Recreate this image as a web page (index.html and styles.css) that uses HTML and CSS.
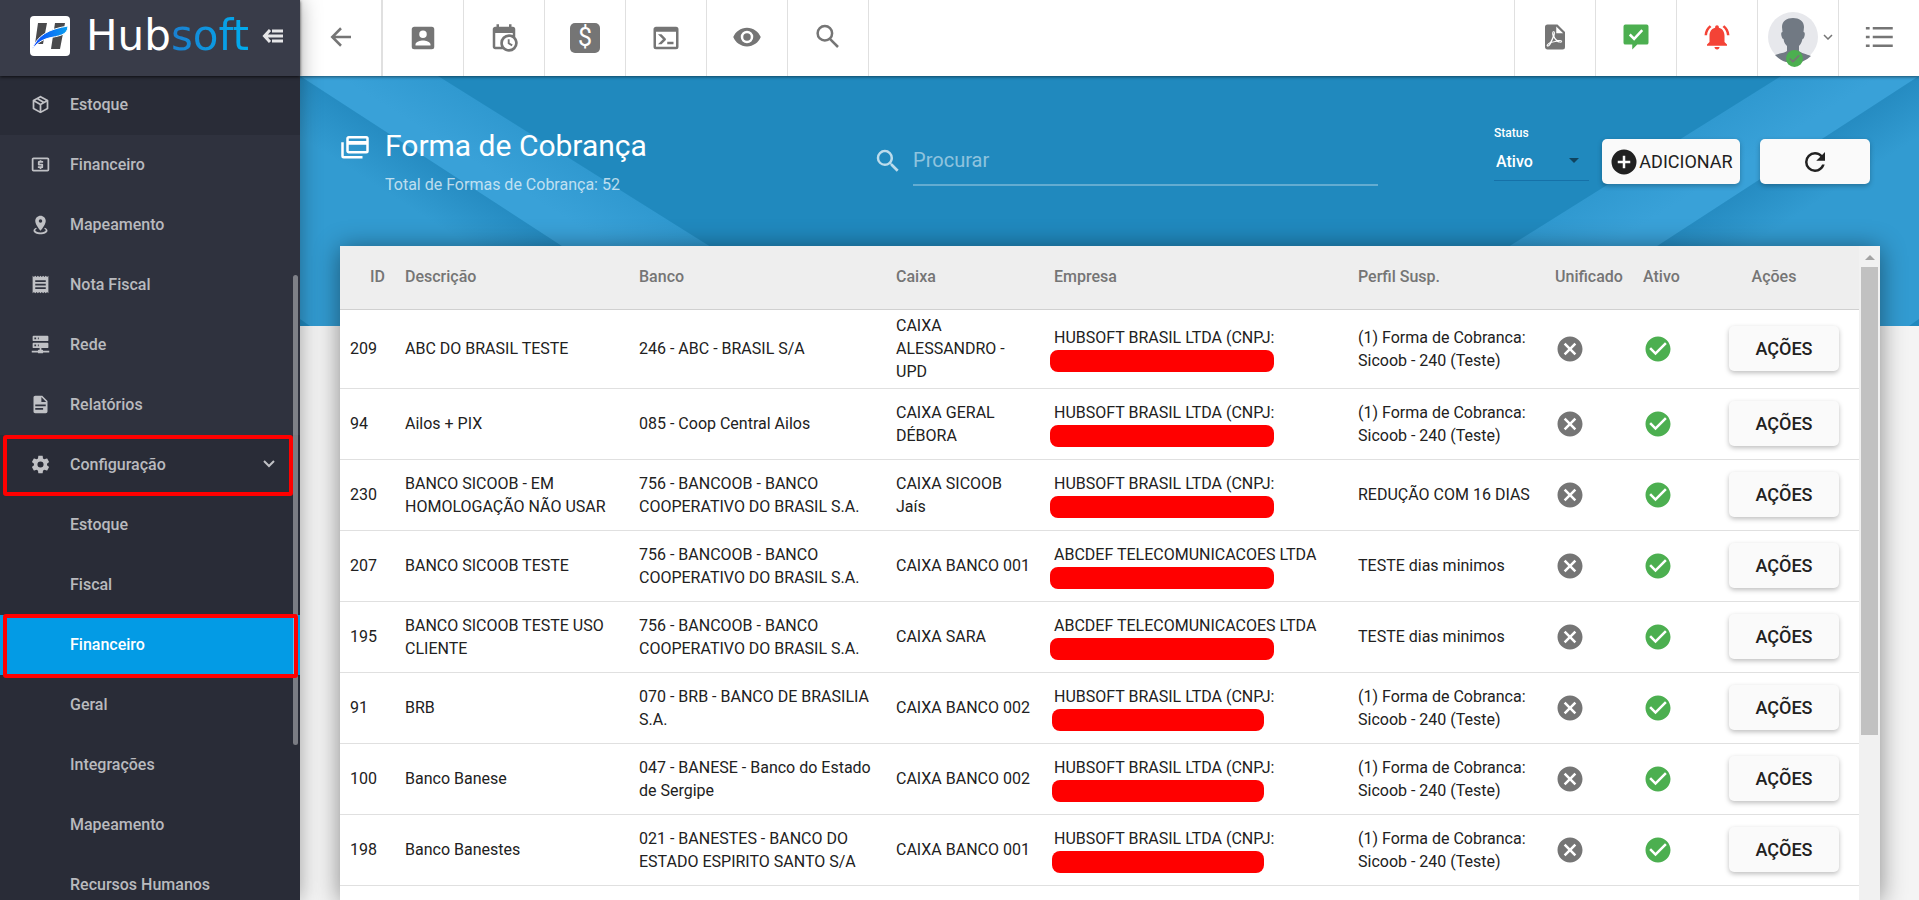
FILE: index.html
```html
<!DOCTYPE html>
<html lang="pt-BR">

<head>
    <meta charset="utf-8">
    <title>Hubsoft - Forma de Cobrança</title>
    <link rel="stylesheet" href="styles.css">
</head>

<body>
    <svg class="sprite" aria-hidden="true">
        <symbol id="i-close" viewBox="0 0 24 24">
            <path d="M12,2C17.53,2 22,6.47 22,12C22,17.53 17.53,22 12,22C6.47,22 2,17.53 2,12C2,6.47 6.47,2 12,2M15.59,7L12,10.59L8.41,7L7,8.41L10.59,12L7,15.59L8.41,17L12,13.41L15.59,17L17,15.59L13.41,12L17,8.41L15.59,7Z" />
        </symbol>
        <symbol id="i-check" viewBox="0 0 24 24">
            <path d="M12 2C6.48 2 2 6.48 2 12s4.48 10 10 10 10-4.48 10-10S17.52 2 12 2zm-2 15l-5-5 1.41-1.41L10 14.17l7.59-7.59L19 8l-9 9z" />
        </symbol>
    </svg>

    <aside class="sidebar">
        <div class="brand">
            <svg class="brand-mark" viewBox="0 0 40 40">
                <defs>
                    <linearGradient id="swoosh" x1="0" x2="1">
                        <stop offset="0" stop-color="#0d47ff" />
                        <stop offset="1" stop-color="#0aa0ee" />
                    </linearGradient>
                </defs>
                <rect width="40" height="40" rx="4" fill="#fff" />
                <path d="M8 7h9l-4 21H5zM25 7h10l-5 26h-9z" fill="#4a4a4c" />
                <path d="M2 34C7 19 19 13 38 10C38 20 27 20 19 22C11 24 6 28 2 34Z" fill="url(#swoosh)" stroke="#fff" />
            </svg>
            <span class="brand-name">Hub<span class="brand-soft">soft</span></span>
            <button class="collapse" aria-label="Recolher menu">
                <svg width="22" height="16" viewBox="0 0 22 16" fill="none" stroke="#e6e6e8" stroke-width="3">
                    <path d="M8 2L2.500 8l5.500 6M2 8h19M10 3h11M10 13h11" />
                </svg>
            </button>
        </div>

        <nav class="menu">
            <a href="#" class="hovered">
                <svg viewBox="0 0 24 24"><path d="M21,16.5C21,16.88 20.79,17.21 20.47,17.38L12.57,21.82C12.41,21.94 12.21,22 12,22C11.79,22 11.59,21.94 11.43,21.82L3.53,17.38C3.21,17.21 3,16.88 3,16.5V7.5C3,7.12 3.21,6.79 3.53,6.62L11.43,2.18C11.59,2.06 11.79,2 12,2C12.21,2 12.41,2.06 12.57,2.18L20.47,6.62C20.79,6.79 21,7.12 21,7.5V16.5M12,4.15L10.11,5.22L16,8.61L17.96,7.5L12,4.15M6.04,7.5L12,10.85L13.96,9.75L8.08,6.35L6.04,7.5M5,15.91L11,19.29V12.58L5,9.21V15.91M19,15.91V9.21L13,12.58V19.29L19,15.91Z" /></svg>
                <span>Estoque</span>
            </a>
            <a href="#">
                <svg viewBox="0 0 24 24"><path d="M11,17H13V16H14A1,1 0 0,0 15,15V12A1,1 0 0,0 14,11H11V10H15V8H13V7H11V8H10A1,1 0 0,0 9,9V12A1,1 0 0,0 10,13H13V14H9V16H11V17M20,4H4C2.89,4 2,4.89 2,6V18A2,2 0 0,0 4,20H20A2,2 0 0,0 22,18V6C22,4.89 21.1,4 20,4M20,18H4V6H20V18Z" /></svg>
                <span>Financeiro</span>
            </a>
            <a href="#">
                <svg viewBox="0 0 24 24"><path d="M12,2C15.31,2 18,4.66 18,7.95C18,12.41 12,19 12,19S6,12.41 6,7.95C6,4.66 8.69,2 12,2M12,6A2,2 0 0,0 10,8A2,2 0 0,0 12,10A2,2 0 0,0 14,8A2,2 0 0,0 12,6M20,19C20,21.21 16.42,23 12,23C7.58,23 4,21.21 4,19C4,17.71 5.22,16.56 7.11,15.83L7.75,16.74C6.67,17.19 6,17.81 6,18.5C6,19.88 8.69,21 12,21C15.31,21 18,19.88 18,18.5C18,17.81 17.33,17.19 16.25,16.74L16.89,15.83C18.78,16.56 20,17.71 20,19Z" /></svg>
                <span>Mapeamento</span>
            </a>
            <a href="#">
                <svg viewBox="0 0 24 24"><path d="M3,22L4.5,20.5L6,22L7.5,20.5L9,22L10.5,20.5L12,22L13.5,20.5L15,22L16.5,20.5L18,22L19.5,20.5L21,22V2L19.5,3.5L18,2L16.5,3.5L15,2L13.5,3.5L12,2L10.5,3.5L9,2L7.5,3.5L6,2L4.5,3.5L3,2M18,9H6V7H18M18,13H6V11H18M18,17H6V15H18V17Z" /></svg>
                <span>Nota Fiscal</span>
            </a>
            <a href="#">
                <svg viewBox="0 0 24 24"><path d="M13,18H14A1,1 0 0,1 15,19H22V21H15A1,1 0 0,1 14,22H10A1,1 0 0,1 9,21H2V19H9A1,1 0 0,1 10,18H11V16H4A1,1 0 0,1 3,15V11A1,1 0 0,1 4,10H20A1,1 0 0,1 21,11V15A1,1 0 0,1 20,16H13V18M4,2H20A1,1 0 0,1 21,3V7A1,1 0 0,1 20,8H4A1,1 0 0,1 3,7V3A1,1 0 0,1 4,2M9,6H10V4H9V6M9,14H10V12H9V14M5,4V6H7V4H5M5,12V14H7V12H5Z" /></svg>
                <span>Rede</span>
            </a>
            <a href="#">
                <svg viewBox="0 0 24 24"><path d="M13,9H18.5L13,3.5V9M6,2H14L20,8V20A2,2 0 0,1 18,22H6C4.89,22 4,21.1 4,20V4C4,2.89 4.89,2 6,2M15,18V16H6V18H15M18,14V12H6V14H18Z" /></svg>
                <span>Relatórios</span>
            </a>
            <a href="#" class="open marked">
                <svg viewBox="0 0 24 24"><path d="M12,15.5A3.5,3.5 0 0,1 8.5,12A3.5,3.5 0 0,1 12,8.5A3.5,3.5 0 0,1 15.5,12A3.5,3.5 0 0,1 12,15.5M19.43,12.97C19.47,12.65 19.5,12.33 19.5,12C19.5,11.67 19.47,11.34 19.43,11L21.54,9.37C21.73,9.22 21.78,8.95 21.66,8.73L19.66,5.27C19.54,5.05 19.27,4.96 19.05,5.05L16.56,6.05C16.04,5.66 15.5,5.32 14.87,5.07L14.5,2.42C14.46,2.18 14.25,2 14,2H10C9.75,2 9.54,2.18 9.5,2.42L9.13,5.07C8.5,5.32 7.96,5.66 7.44,6.05L4.95,5.05C4.73,4.96 4.46,5.05 4.34,5.27L2.34,8.73C2.21,8.95 2.27,9.22 2.46,9.37L4.57,11C4.53,11.34 4.5,11.67 4.5,12C4.5,12.33 4.53,12.65 4.57,12.97L2.46,14.63C2.27,14.78 2.21,15.05 2.34,15.27L4.34,18.73C4.46,18.95 4.73,19.03 4.95,18.95L7.44,17.94C7.96,18.34 8.5,18.68 9.13,18.93L9.5,21.58C9.54,21.82 9.75,22 10,22H14C14.25,22 14.46,21.82 14.5,21.58L14.87,18.93C15.5,18.67 16.04,18.34 16.56,17.94L19.05,18.95C19.27,19.03 19.54,18.95 19.66,18.73L21.66,15.27C21.78,15.05 21.73,14.78 21.54,14.63L19.43,12.97Z" /></svg>
                <span>Configuração</span>
                <svg class="chevron" viewBox="0 0 12 12" fill="none"><path d="M1 3l5 5 5-5" stroke="#c0c1c5" stroke-width="2" /></svg>
            </a>
            <div class="submenu">
                <a href="#">Estoque</a>
                <a href="#">Fiscal</a>
                <a href="#" class="active marked">Financeiro</a>
                <a href="#">Geral</a>
                <a href="#">Integrações</a>
                <a href="#">Mapeamento</a>
                <a href="#">Recursos Humanos</a>
            </div>
        </nav>
        <div class="menu-scroll"></div>
    </aside>

    <main>
        <header class="toolbar">
            <button class="tool last" aria-label="Voltar">
                <svg viewBox="0 0 24 24" fill="none" stroke="#757575" stroke-width="2"><path d="M20 12H5M12 5L5 12l7 7" /></svg>
            </button>
            <button class="tool quick" aria-label="Clientes">
                <svg viewBox="0 0 24 24"><path d="M6,17C6,15 10,13.9 12,13.9C14,13.9 18,15 18,17V18H6M15,9A3,3 0 0,1 12,12A3,3 0 0,1 9,9A3,3 0 0,1 12,6A3,3 0 0,1 15,9M3,5V19A2,2 0 0,0 5,21H19A2,2 0 0,0 21,19V5A2,2 0 0,0 19,3H5C3.89,3 3,3.9 3,5Z" /></svg>
            </button>
            <button class="tool quick" aria-label="Agenda">
                <svg viewBox="0 0 24 24"><path d="M15,13H16.5V15.82L18.94,17.23L18.19,18.53L15,16.69V13M19,8H5V19H9.67C9.24,18.09 9,17.07 9,16A7,7 0 0,1 16,9C17.07,9 18.09,9.24 19,9.67V8M5,21C3.89,21 3,20.1 3,19V5C3,3.89 3.89,3 5,3H6V1H8V3H16V1H18V3H19A2,2 0 0,1 21,5V11.1C22.24,12.36 23,14.09 23,16A7,7 0 0,1 16,23C14.09,23 12.36,22.24 11.1,21H5M16,11.15A4.85,4.85 0 0,0 11.15,16C11.15,18.68 13.32,20.85 16,20.85A4.85,4.85 0 0,0 20.85,16C20.85,13.32 18.68,11.15 16,11.15Z" /></svg>
            </button>
            <button class="tool quick" aria-label="Financeiro">
                <span class="dollar">$</span>
            </button>
            <button class="tool quick" aria-label="Terminal">
                <svg viewBox="0 0 24 24"><path d="M20,19V7H4V19H20M20,3A2,2 0 0,1 22,5V19A2,2 0 0,1 20,21H4A2,2 0 0,1 2,19V5C2,3.89 2.9,3 4,3H20M13,17V15H18V17H13M9.58,13L5.57,9H8.4L11.7,12.3C12.09,12.69 12.09,13.33 11.7,13.72L8.42,17H5.59L9.58,13Z" /></svg>
            </button>
            <button class="tool" aria-label="Visualizar">
                <svg viewBox="0 0 24 24"><path d="M12,9A3,3 0 0,0 9,12A3,3 0 0,0 12,15A3,3 0 0,0 15,12A3,3 0 0,0 12,9M12,17A5,5 0 0,1 7,12A5,5 0 0,1 12,7A5,5 0 0,1 17,12A5,5 0 0,1 12,17M12,4.5C7,4.5 2.73,7.61 1,12C2.73,16.39 7,19.5 12,19.5C17,19.5 21.27,16.39 23,12C21.27,7.61 17,4.5 12,4.5Z" /></svg>
            </button>
            <button class="tool" aria-label="Pesquisar">
                <svg viewBox="0 0 24 24" fill="none" stroke="#757575" stroke-width="2"><circle cx="9.500" cy="9" r="5.800" /><path d="M13.500 13.500L20 20" /></svg>
            </button>

            <div class="toolbar-right">
                <button class="tool" aria-label="PDF">
                    <svg viewBox="1 0 24 24"><path d="M14,9H19.5L14,3.5V9M7,2H15L21,8V20A2,2 0 0,1 19,22H7C5.89,22 5,21.1 5,20V4A2,2 0 0,1 7,2M11.93,12.44C12.34,13.34 12.86,14.08 13.46,14.59L13.87,14.91C13,15.07 11.8,15.35 10.53,15.84V15.84L10.42,15.88L10.92,14.84C11.37,13.97 11.7,13.18 11.93,12.44M18.41,16.25C18.59,16.07 18.68,15.84 18.69,15.59C18.72,15.39 18.67,15.2 18.57,15.04C18.28,14.57 17.53,14.35 16.29,14.35L15,14.42L14.13,13.84C13.5,13.32 12.93,12.41 12.53,11.28L12.57,11.14C12.9,9.81 13.21,8.2 12.55,7.54C12.39,7.38 12.17,7.3 11.94,7.3H11.7C11.33,7.3 11,7.69 10.91,8.07C10.54,9.4 10.76,10.13 11.13,11.34V11.35C10.88,12.23 10.56,13.25 10.05,14.28L9.09,16.08L8.2,16.57C7,17.32 6.43,18.16 6.32,18.69C6.28,18.88 6.3,19.05 6.37,19.23L6.4,19.28L6.88,19.59L7.32,19.7C8.13,19.7 9.05,18.75 10.29,16.63L10.47,16.56C11.5,16.23 12.78,16 14.5,15.81C15.53,16.32 16.74,16.55 17.5,16.55C17.94,16.55 18.24,16.44 18.41,16.25M18,15.54L18.09,15.65C18.08,15.75 18.05,15.76 18,15.78H17.96L17.77,15.8C17.31,15.8 16.6,15.61 15.87,15.29C15.96,15.19 16,15.19 16.1,15.19C17.5,15.19 17.9,15.44 18,15.54M8.83,17C8.18,18.19 7.59,18.85 7.14,19C7.19,18.62 7.64,17.96 8.35,17.31L8.83,17M11.85,10.09C11.62,9.19 11.61,8.46 11.78,8.04L11.85,7.92L12,7.97C12.17,8.21 12.19,8.53 12.09,9.07L12.06,9.23L11.9,10.05L11.85,10.09Z" /></svg>
                </button>
                <button class="tool" aria-label="Mensagens">
                    <svg viewBox="0 0 24 24"><path d="M3.500 2h17A1.500 1.500 0 0 1 22 3.500v13A1.500 1.500 0 0 1 20.500 18H13l-4 4v-4H3.500A1.500 1.500 0 0 1 2 16.500v-13A1.500 1.500 0 0 1 3.500 2z" fill="#4caf50" /><path d="M7 10l3.500 3.500L17 6.500" fill="none" stroke="#fff" stroke-width="2" /></svg>
                </button>
                <button class="tool" aria-label="Notificações">
                    <svg viewBox="0 0 24 24"><path fill="#f44336" d="M7.58 4.08L6.15 2.65C3.75 4.48 2.17 7.3 2.03 10.5h2c.15-2.65 1.51-4.97 3.55-6.42zm12.39 6.42h2c-.15-3.2-1.73-6.02-4.12-7.85l-1.42 1.43c2.02 1.45 3.39 3.77 3.54 6.42zM18 11c0-3.07-1.64-5.64-4.5-6.32V4c0-.83-.67-1.5-1.5-1.5s-1.5.67-1.5 1.5v.68C7.63 5.36 6 7.92 6 11v5l-2 2v1h16v-1l-2-2v-5zm-6 11c.14 0 .27-.01.4-.04.65-.14 1.18-.58 1.44-1.18.1-.24.15-.5.15-.78h-4c.01 1.1.9 2 2.01 2z" /></svg>
                </button>
                <button class="tool user" aria-label="Usuário">
                    <span class="avatar">
                        <svg viewBox="0 0 50 50">
                            <circle cx="25" cy="25" r="25" fill="#e7e8ec" />
                            <path d="M25 6C31 6 36 9 36 15L35.500 20C37 20 37 22 36.500 24C36 26 35.500 27 34.500 27C33.500 31 32 33 31 34V39C33 41 38 42 43 44A25 25 0 0 1 7 43C12 41 17 41 19 39V34C18 33 16 31 15.500 27C14.500 27 14 26 13.500 24C13 22 13 20 14.500 20L14 15C14 9 19 6 25 6Z" fill="#717983" />
                        </svg>
                        <svg class="badge" viewBox="0 0 16 16"><circle cx="8" cy="8" r="8" fill="#4caf50" /><path d="M3.500 8l3 3 6-6" fill="none" stroke="#757575" stroke-width="1.500" /></svg>
                    </span>
                    <svg class="caret" viewBox="0 0 10 6" fill="none" stroke="#757575" stroke-width="1.500"><path d="M1 1l4 4 4-4" /></svg>
                </button>
                <button class="tool last" aria-label="Lista">
                    <svg viewBox="0 0 24 24" fill="none" stroke="#757575" stroke-width="2"><path d="M7 5h16M7 12h16M7 19h16M1.500 5h3M1.500 12h3M1.500 19h3" /></svg>
                </button>
            </div>
        </header>

        <section class="hero">
            <svg class="hero-bg" viewBox="0 0 1619 250" preserveAspectRatio="none" aria-hidden="true">
                <defs>
                    <linearGradient id="sideL" gradientUnits="userSpaceOnUse" x1="192" y1="125" x2="165" y2="167">
                        <stop offset="0" stop-color="#268cc2" />
                        <stop offset="1" stop-color="#329bd1" />
                    </linearGradient>
                    <linearGradient id="bandL" gradientUnits="userSpaceOnUse" x1="338" y1="125" x2="310" y2="170">
                        <stop offset="0" stop-color="#3099d0" />
                        <stop offset="1" stop-color="#39a1d8" />
                    </linearGradient>
                </defs>
                <rect width="1619" height="250" fill="#2089be" />
                <g id="fold">
                    <path d="M0 0L385 250H0Z" fill="url(#sideL)" />
                    <path d="M0 0H138L537 250H385Z" fill="url(#bandL)" />
                    <path d="M0 243L10 250H0Z" fill="#2089be" />
                </g>
                <use href="#fold" transform="matrix(-1 0 0 1 1619 0)" />
            </svg>

            <div class="title">
                <svg viewBox="0 0 24 24" fill="#fff"><path d="M21,8V6H7V8H21M21,16V11H7V16H21M21,4A2,2 0 0,1 23,6V16A2,2 0 0,1 21,18H7C5.89,18 5,17.1 5,16V6C5,4.89 5.89,4 7,4H21M3,20H18V22H3A2,2 0 0,1 1,20V9H3V20Z" /></svg>
                <div>
                    <h1>Forma de Cobrança</h1>
                    <p>Total de Formas de Cobrança: 52</p>
                </div>
            </div>

            <div class="search">
                <label for="procurar" aria-label="Procurar">
                    <svg viewBox="0 0 24 24"><path d="M9.5,3A6.5,6.5 0 0,1 16,9.5C16,11.11 15.41,12.59 14.44,13.73L14.71,14H15.5L20.5,19L19,20.5L14,15.5V14.71L13.73,14.44C12.59,15.41 11.11,16 9.5,16A6.5,6.5 0 0,1 3,9.5A6.5,6.5 0 0,1 9.5,3M9.5,5C7,5 5,7 5,9.5C5,12 7,14 9.5,14C12,14 14,12 14,9.5C14,7 12,5 9.5,5Z" /></svg>
                </label>
                <input type="text" id="procurar" placeholder="Procurar">
            </div>

            <div class="status">
                <label for="status">Status</label>
                <select id="status">
                    <option>Ativo</option>
                </select>
            </div>

            <div class="hero-actions">
                <button class="raised add">
                    <svg viewBox="0 0 24 24"><path d="M17,13H13V17H11V13H7V11H11V7H13V11H17M12,2A10,10 0 0,0 2,12A10,10 0 0,0 12,22A10,10 0 0,0 22,12A10,10 0 0,0 12,2Z" /></svg>
                    <span>ADICIONAR</span>
                </button>
                <button class="raised" aria-label="Atualizar">
                    <svg viewBox="0 0 24 24"><path d="M17.65,6.35C16.2,4.9 14.21,4 12,4A8,8 0 0,0 4,12A8,8 0 0,0 12,20C15.73,20 18.84,17.45 19.73,14H17.65C16.83,16.33 14.61,18 12,18A6,6 0 0,1 6,12A6,6 0 0,1 12,6C13.66,6 15.14,6.69 16.22,7.78L13,11H20V4L17.65,6.35Z" /></svg>
                </button>
            </div>
        </section>

        <section class="card">
            <div class="table-wrap">
                <table>
                    <thead>
                        <tr>
                            <th class="c-id">ID</th>
                            <th class="c-desc">Descrição</th>
                            <th class="c-banco">Banco</th>
                            <th class="c-caixa">Caixa</th>
                            <th class="c-empresa">Empresa</th>
                            <th class="c-perfil">Perfil Susp.</th>
                            <th class="c-unif">Unificado</th>
                            <th class="c-ativo">Ativo</th>
                            <th class="c-acoes">Ações</th>
                        </tr>
                    </thead>
                    <tbody>
                        <tr>
                            <td>209</td>
                            <td>ABC DO BRASIL TESTE</td>
                            <td>246 - ABC - BRASIL S/A</td>
                            <td>CAIXA ALESSANDRO - UPD</td>
                            <td>HUBSOFT BRASIL LTDA (CNPJ:<span class="redact"></span></td>
                            <td>(1) Forma de Cobranca: Sicoob - 240 (Teste)</td>
                            <td><svg class="no"><use href="#i-close" /></svg></td>
                            <td><svg class="yes"><use href="#i-check" /></svg></td>
                            <td class="acoes"><button class="raised">AÇÕES</button></td>
                        </tr>
                        <tr>
                            <td>94</td>
                            <td>Ailos + PIX</td>
                            <td>085 - Coop Central Ailos</td>
                            <td>CAIXA GERAL DÉBORA</td>
                            <td>HUBSOFT BRASIL LTDA (CNPJ:<span class="redact"></span></td>
                            <td>(1) Forma de Cobranca: Sicoob - 240 (Teste)</td>
                            <td><svg class="no"><use href="#i-close" /></svg></td>
                            <td><svg class="yes"><use href="#i-check" /></svg></td>
                            <td class="acoes"><button class="raised">AÇÕES</button></td>
                        </tr>
                        <tr>
                            <td>230</td>
                            <td>BANCO SICOOB - EM HOMOLOGAÇÃO NÃO USAR</td>
                            <td>756 - BANCOOB - BANCO COOPERATIVO DO BRASIL S.A.</td>
                            <td>CAIXA SICOOB Jaís</td>
                            <td>HUBSOFT BRASIL LTDA (CNPJ:<span class="redact"></span></td>
                            <td>REDUÇÃO COM 16 DIAS</td>
                            <td><svg class="no"><use href="#i-close" /></svg></td>
                            <td><svg class="yes"><use href="#i-check" /></svg></td>
                            <td class="acoes"><button class="raised">AÇÕES</button></td>
                        </tr>
                        <tr>
                            <td>207</td>
                            <td>BANCO SICOOB TESTE</td>
                            <td>756 - BANCOOB - BANCO COOPERATIVO DO BRASIL S.A.</td>
                            <td>CAIXA BANCO 001</td>
                            <td>ABCDEF TELECOMUNICACOES LTDA<span class="redact"></span></td>
                            <td>TESTE dias minimos</td>
                            <td><svg class="no"><use href="#i-close" /></svg></td>
                            <td><svg class="yes"><use href="#i-check" /></svg></td>
                            <td class="acoes"><button class="raised">AÇÕES</button></td>
                        </tr>
                        <tr>
                            <td>195</td>
                            <td>BANCO SICOOB TESTE USO CLIENTE</td>
                            <td>756 - BANCOOB - BANCO COOPERATIVO DO BRASIL S.A.</td>
                            <td>CAIXA SARA</td>
                            <td>ABCDEF TELECOMUNICACOES LTDA<span class="redact"></span></td>
                            <td>TESTE dias minimos</td>
                            <td><svg class="no"><use href="#i-close" /></svg></td>
                            <td><svg class="yes"><use href="#i-check" /></svg></td>
                            <td class="acoes"><button class="raised">AÇÕES</button></td>
                        </tr>
                        <tr>
                            <td>91</td>
                            <td>BRB</td>
                            <td>070 - BRB - BANCO DE BRASILIA S.A.</td>
                            <td>CAIXA BANCO 002</td>
                            <td>HUBSOFT BRASIL LTDA (CNPJ:<span class="redact short"></span></td>
                            <td>(1) Forma de Cobranca: Sicoob - 240 (Teste)</td>
                            <td><svg class="no"><use href="#i-close" /></svg></td>
                            <td><svg class="yes"><use href="#i-check" /></svg></td>
                            <td class="acoes"><button class="raised">AÇÕES</button></td>
                        </tr>
                        <tr>
                            <td>100</td>
                            <td>Banco Banese</td>
                            <td>047 - BANESE - Banco do Estado de Sergipe</td>
                            <td>CAIXA BANCO 002</td>
                            <td>HUBSOFT BRASIL LTDA (CNPJ:<span class="redact short"></span></td>
                            <td>(1) Forma de Cobranca: Sicoob - 240 (Teste)</td>
                            <td><svg class="no"><use href="#i-close" /></svg></td>
                            <td><svg class="yes"><use href="#i-check" /></svg></td>
                            <td class="acoes"><button class="raised">AÇÕES</button></td>
                        </tr>
                        <tr>
                            <td>198</td>
                            <td>Banco Banestes</td>
                            <td>021 - BANESTES - BANCO DO ESTADO ESPIRITO SANTO S/A</td>
                            <td>CAIXA BANCO 001</td>
                            <td>HUBSOFT BRASIL LTDA (CNPJ:<span class="redact short"></span></td>
                            <td>(1) Forma de Cobranca: Sicoob - 240 (Teste)</td>
                            <td><svg class="no"><use href="#i-close" /></svg></td>
                            <td><svg class="yes"><use href="#i-check" /></svg></td>
                            <td class="acoes"><button class="raised">AÇÕES</button></td>
                        </tr>
                    </tbody>
                </table>
            </div>
            <div class="scrollbar">
                <span class="scroll-up"></span>
                <div class="scroll-thumb"></div>
            </div>
        </section>
    </main>
</body>

</html>
```
FILE: styles.css
```css
* {
    box-sizing: border-box;
}

body {
    margin: 0;
    display: flex;
    height: 100vh;
    overflow: hidden;
    background-color: #f4f4f4;
    color: #212121;
    font-family: Roboto, "Liberation Sans", sans-serif;
    font-size: 16px;
}

button,
input,
select {
    font-family: inherit;
}

button {
    cursor: pointer;
}

.sprite {
    display: none;
}

/* Sidebar */

.sidebar {
    position: relative;
    z-index: 2;
    display: flex;
    flex-direction: column;
    flex: none;
    width: 300px;
    background-color: #2f323e;
    box-shadow: 0 0 20px rgba(0, 0, 0, 0.35);
}

.brand {
    position: relative;
    z-index: 1;
    display: flex;
    flex: none;
    align-items: center;
    height: 76px;
    padding: 0 16px 4px 30px;
    background-color: #393c49;
    box-shadow: 0 1px 3px rgba(0, 0, 0, 0.7);
}

.brand-mark {
    width: 40px;
    height: 40px;
    margin-right: 16px;
}

.brand-name {
    color: #fff;
    font-family: "DejaVu Sans", sans-serif;
    font-size: 42px;
    line-height: 40px;
}

.brand-soft {
    background: linear-gradient(90deg, #1b7fd0, #00aeef);
    -webkit-background-clip: text;
    background-clip: text;
    color: transparent;
}

.collapse {
    display: flex;
    margin-left: auto;
    padding: 0;
    border: none;
    background: none;
}

.menu {
    flex: 1;
    min-height: 0;
    margin-top: -1px;
    overflow: hidden;
}

.menu a {
    position: relative;
    display: flex;
    align-items: center;
    height: 60px;
    padding: 0 20px 2px 30px;
    color: #b9babe;
    font-weight: 500;
    text-decoration: none;
}

.menu svg {
    width: 21px;
    height: 21px;
    margin-right: 19px;
    fill: #c0c1c5;
}

.menu .chevron {
    width: 12px;
    height: 12px;
    margin: 0 5px 0 auto;
    fill: none;
}

.menu .hovered,
.menu .open,
.submenu {
    background-color: #292c37;
}

.menu .submenu a {
    padding-left: 70px;
}

.menu .active {
    background-color: #039be5;
    color: #fff;
}

/* Red frames over the path to follow in the menu */
.marked::after {
    content: "";
    position: absolute;
    z-index: 2;
    inset: 0 7px -1px 3px;
    border: 4px solid #f00;
    border-radius: 3px;
}

.active.marked::after {
    inset: -1px 2px -3px 3px;
}

.menu-scroll {
    position: absolute;
    top: 275px;
    right: 2px;
    width: 5px;
    height: 470px;
    border-radius: 3px;
    background-color: rgba(255, 255, 255, 0.38);
}

/* Toolbar */

main {
    display: flex;
    flex: 1;
    flex-direction: column;
    min-width: 0;
}

.toolbar {
    position: relative;
    z-index: 1;
    display: flex;
    flex: none;
    height: 76px;
    background-color: #fff;
    box-shadow: 0 1px 3px rgba(0, 0, 0, 0.5);
}

.toolbar-right {
    display: flex;
    margin-left: auto;
}

.tool {
    display: flex;
    align-items: center;
    justify-content: center;
    width: 81px;
    padding: 0 0 3px;
    border: none;
    border-right: 1px solid #e0e0e0;
    background: none;
}

.toolbar > .last {
    width: 83px;
    border-right-width: 2px;
}

.toolbar-right .tool {
    border-right: none;
    border-left: 1px solid #e0e0e0;
}

.quick {
    padding: 0;
}

.tool svg {
    width: 30px;
    height: 30px;
    fill: #757575;
}

.tool svg[fill="none"] {
    fill: none;
}

.dollar {
    width: 30px;
    height: 30px;
    border-radius: 5px;
    background-color: #757575;
    color: #fff;
    font-size: 25px;
    line-height: 30px;
}

.toolbar-right .user {
    justify-content: flex-end;
    gap: 5px;
    padding-right: 5px;
}

.avatar {
    position: relative;
    display: flex;
}

.avatar svg {
    width: 50px;
    height: 50px;
}

.avatar .badge {
    position: absolute;
    left: 18px;
    bottom: -5px;
    width: 17px;
    height: 17px;
}

.tool .caret {
    width: 10px;
    height: 6px;
}

/* Page header */

.hero {
    position: relative;
    display: flex;
    flex: none;
    align-items: flex-start;
    height: 250px;
    padding: 49px 49px 0 40px;
    color: #fff;
}

.hero-bg {
    position: absolute;
    inset: 0;
    z-index: -1;
    width: 100%;
    height: 100%;
}

.title {
    display: flex;
    flex: 1;
    gap: 15px;
}

.title svg {
    width: 30px;
    height: 30px;
    margin-top: 6px;
}

.title h1 {
    margin: 0;
    font-size: 30px;
    font-weight: 400;
    line-height: 42px;
}

.title p {
    margin: 6px 0 0;
    color: rgba(255, 255, 255, 0.7);
    line-height: 24px;
}

.search {
    display: flex;
    align-items: center;
    gap: 10px;
    width: 33%;
    margin: 11px 116px 0 0;
}

.search svg {
    display: block;
    width: 30px;
    height: 30px;
    fill: rgba(255, 255, 255, 0.7);
}

.search input {
    flex: 1;
    min-width: 0;
    height: 50px;
    padding: 0;
    border: none;
    border-bottom: 2px solid rgba(255, 255, 255, 0.3);
    outline: none;
    background: none;
    color: #fff;
    font-size: 20px;
}

.search input::placeholder {
    color: rgba(255, 255, 255, 0.5);
}

.status {
    position: relative;
    display: flex;
    flex-direction: column;
    width: 95px;
    margin-right: 13px;
}

.status label {
    font-size: 12px;
    font-weight: 500;
    line-height: 16px;
}

.status select {
    height: 40px;
    padding: 1px 2px 0;
    border: none;
    border-bottom: 1px solid rgba(0, 60, 120, 0.3);
    appearance: none;
    background: none;
    color: #fff;
    font-size: 16px;
    font-weight: 500;
}

.status::after {
    content: "";
    position: absolute;
    top: 33px;
    right: 10px;
    border: 5px solid transparent;
    border-top-color: rgba(0, 0, 0, 0.5);
    border-bottom: none;
}

.hero-actions {
    display: flex;
    gap: 20px;
    padding-top: 14px;
}

.raised {
    display: inline-flex;
    align-items: center;
    justify-content: center;
    width: 110px;
    height: 45px;
    padding: 0;
    border: none;
    border-radius: 5px;
    background-color: #fafafa;
    box-shadow: 0 2px 5px rgba(0, 0, 0, 0.26);
    color: #212121;
    font-size: 18px;
    font-weight: 500;
}

.raised svg {
    width: 30px;
    height: 30px;
    fill: #212121;
}

.add {
    width: 138px;
    font-weight: 400;
}

/* Table */

.card {
    position: relative;
    display: flex;
    flex: 1;
    min-height: 0;
    margin: -80px 39px 0 40px;
    background-color: #fff;
    box-shadow: 0 2px 24px rgba(0, 0, 0, 0.45);
}

.table-wrap {
    flex: 1;
    overflow: hidden;
}

table {
    width: 100%;
    border-spacing: 0;
    table-layout: fixed;
}

th {
    height: 64px;
    padding: 0 10px 2px;
    border-bottom: 1px solid #d0d0d0;
    background-color: #eee;
    color: #757575;
    font-weight: 500;
    text-align: left;
}

td {
    height: 71px;
    padding: 4px 10px 5px;
    border-bottom: 1px solid #e0e0e0;
    line-height: 23px;
}

td svg {
    display: block;
    width: 30px;
    height: 30px;
}

.no {
    fill: #757575;
}

.yes {
    fill: #4caf50;
}

.c-id {
    width: 55px;
    text-align: right;
}

.c-desc {
    width: 234px;
}

.c-banco {
    width: 257px;
}

.c-caixa {
    width: 158px;
}

.c-perfil {
    width: 197px;
}

.c-unif {
    width: 88px;
}

.c-ativo {
    width: 76px;
}

.c-acoes {
    width: 150px;
    padding: 0 20px 2px 0;
    text-align: center;
}

.acoes {
    padding: 4px 20px 5px 0;
}

.acoes .raised {
    display: block;
    margin-left: auto;
}

.redact {
    display: block;
    width: 224px;
    height: 22px;
    margin: 1px 0 0 -4px;
    border-radius: 8px;
    background-color: #f00;
}

.redact.short {
    width: 212px;
    margin-left: -2px;
}

.scrollbar {
    display: flex;
    flex-direction: column;
    align-items: center;
    width: 21px;
    background-color: #f1f1f1;
}

.scroll-up {
    margin: 9px 0 7px;
    border: 5px solid transparent;
    border-top: none;
    border-bottom-color: #a3a3a3;
}

.scroll-thumb {
    width: 17px;
    height: 468px;
    background-color: #c1c1c1;
}
```
